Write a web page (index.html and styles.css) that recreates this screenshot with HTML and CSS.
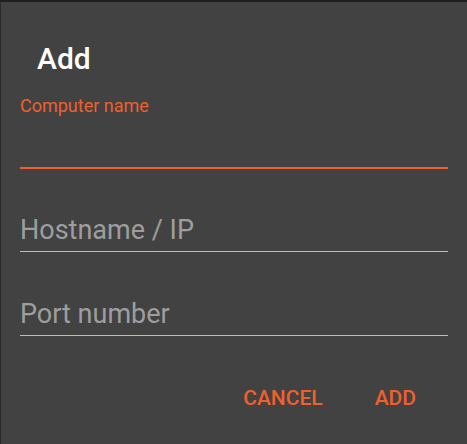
FILE: index.html
```html
<!DOCTYPE html>
<html>
<head>
<meta charset="utf-8">
<link rel="stylesheet" href="styles.css">
</head>
<body>
<div class="dialog">
  <div class="title">Add</div>
  <div class="field active">
    <div class="label">Computer name</div>
    <div class="input"></div>
  </div>
  <div class="field">
    <div class="placeholder">Hostname / IP</div>
  </div>
  <div class="field">
    <div class="placeholder">Port number</div>
  </div>
  <div class="actions">
    <span class="btn">CANCEL</span>
    <span class="btn">ADD</span>
  </div>
</div>
</body>
</html>
```
FILE: styles.css
```css
html, body {
  margin: 0;
  padding: 0;
  background: #424242;
}
body {
  width: 467px;
  height: 444px;
  overflow: hidden;
  font-family: Roboto, "Liberation Sans", sans-serif;
}
.dialog {
  box-sizing: border-box;
  width: 467px;
  height: 444px;
  border-top: 2px solid #1f1f1f;
  border-left: 1px solid #2a2a2a;
  padding: 39px 19px 0 19px;
}
.title {
  color: #ffffff;
  font-size: 30px;
  font-weight: 500;
  line-height: 36px;
  padding-left: 17px;
  margin-top: 0;
}
.field.active {
  margin-top: 19px;
}
.label {
  color: #f0602c;
  font-size: 18px;
  line-height: 20px;
}
.input {
  height: 51px;
  border-bottom: 2px solid #f0602c;
}
.field .placeholder {
  color: #9e9e9e;
  font-size: 27px;
  line-height: 32px;
  height: 37px;
  border-bottom: 1px solid #bdbdbd;
  margin-top: 45px;
}
.field + .field + .field .placeholder {
  margin-top: 46px;
}
.actions {
  display: flex;
  justify-content: flex-end;
  gap: 52px;
  padding-right: 32px;
  margin-top: 50px;
}
.btn {
  color: #f0602c;
  font-size: 21px;
  font-weight: 500;
  line-height: 24px;
}
```
